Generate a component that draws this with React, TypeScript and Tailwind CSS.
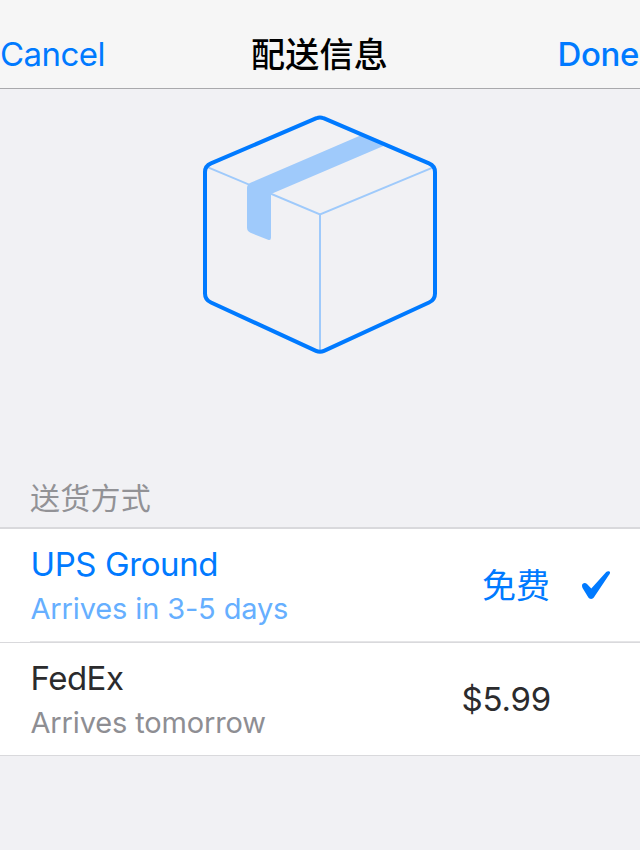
const latin = "font-['Inter','Noto_Sans_CJK_SC',sans-serif]";
const cjk = "font-['Noto_Sans_CJK_SC',sans-serif]";

function BoxIcon() {
  return (
    <svg className="block h-[242px] w-[240px]" viewBox="200 114 240 242" fill="none">
      <path d="M208 167.3 320 214.5 432 167.8M320 214.5V351" stroke="#9fcafb" strokeWidth="2" />
      <path
        d="M247 188Q247 184.3 251 182.6L361 135.2 384 145.7 271 194V237.5Q271 241 268 239.8L250.5 232.8Q247 231.2 247 227.5Z"
        fill="#9fcafb"
      />
      <path
        d="M316.5 118.2Q320 116.6 323.5 118.2L429 163.4Q435 166 435 172V293.5Q435 299.8 429 302.5L324 350.9Q320 352.8 316 350.9L211 302.5Q205 299.8 205 293.5V172Q205 166 211 163.4Z"
        stroke="#007aff"
        strokeWidth="4"
      />
    </svg>
  );
}

function CheckIcon() {
  return (
    <svg className="block h-7 w-7" viewBox="0 0 28 28">
      <path
        d="M0 14.6C0 12 3.2 11 5 13L9.3 17.6 24.2.9C25.3-.2 28.5-.3 28 1.9 27.8 2.7 27.3 3.4 26.9 4L12 26.2C10.6 28.5 7.6 28.5 6.2 26.2L.7 17.3Q0 16.2 0 14.6Z"
        fill="#007aff"
      />
    </svg>
  );
}

export default function App() {
  return (
    <div className={`flex h-[850px] w-[640px] flex-col overflow-hidden bg-[#f1f1f4] ${latin}`}>
      <header className="grid h-[89px] grid-cols-[1fr_auto_1fr] items-end border-b border-[#a9a9ac] bg-[#f6f6f6] pb-[13px] text-[33px] leading-[42px] text-[#007aff]">
        <button className="text-left tracking-[-0.55px]">Cancel</button>
        <h1 className={`mb-px -ml-px text-[34px] font-medium tracking-[0.3px] text-black ${cjk}`}>配送信息</h1>
        <button className="pr-px text-right font-medium tracking-[-0.4px]">Done</button>
      </header>

      <div className="flex h-[387px] justify-center pt-[25px]">
        <BoxIcon />
      </div>

      <h2 className={`h-[51px] pl-[30px] text-[30px] leading-[40px] tracking-[0.25px] text-[#929296] ${cjk}`}>送货方式</h2>

      <ul className="bg-white">
        <li className="flex h-[114px] items-center border-t-2 border-[#d9d9dc] pl-[30.5px] text-[#007aff]">
          <div className="grow pt-[4px]">
            <div className="text-[33px] leading-[43px] tracking-[-0.4px]">UPS Ground</div>
            <div className="text-[29px] leading-[45px] tracking-[-0.14px] text-[#66afff]">Arrives in 3-5 days</div>
          </div>
          <div className={`mr-8 pb-[3px] text-[34px] leading-[44px] ${cjk}`}>免费</div>
          <div className="mr-[30px]">
            <CheckIcon />
          </div>
        </li>
        <li className="ml-[30px] h-px bg-[#e5e5e7]" />
        <li className="flex h-[114px] items-center border-y border-[#d9d9dc] pl-[30.5px] text-[#2b2b2d]">
          <div className="grow pt-[4px]">
            <div className="text-[33px] leading-[43px] tracking-[-0.5px]">FedEx</div>
            <div className="text-[29px] leading-[45px] tracking-[-0.14px] text-[#8e8e93]">Arrives tomorrow</div>
          </div>
          <div className="mr-[89px] text-[33px] leading-[44px] tracking-[-0.2px]">$5.99</div>
        </li>
      </ul>
    </div>
  );
}
